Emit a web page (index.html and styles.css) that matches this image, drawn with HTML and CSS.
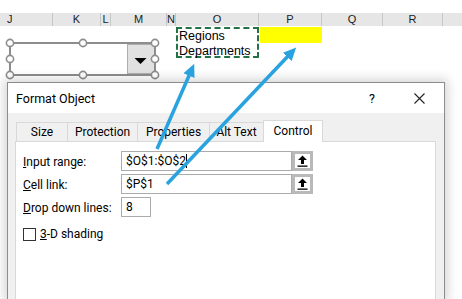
FILE: index.html
```html
<!DOCTYPE html>
<html>
<head>
<meta charset="utf-8">
<link rel="stylesheet" href="styles.css">
</head>
<body>
<div class="sheet">
  <div class="colhdr">
    <span class="col-j">J</span><span>K</span><span>L</span><span>M</span><span>N</span><span>O</span><span>P</span><span>Q</span><span>R</span><span class="col-end"></span>
  </div>
  <div class="cells">
    <div class="listrange">Regions<br>Departments</div>
    <div class="linkcell"></div>
  </div>
</div>

<svg class="combo" width="462" height="90" viewBox="0 0 462 90">
  <rect x="10" y="43" width="145" height="32" fill="#fff"/>
  <rect x="127.5" y="44.5" width="27" height="29" fill="#e1e1e1" stroke="#adadad"/>
  <polygon points="134.5,58 146.5,58 140.5,64" fill="#000"/>
  <rect x="10" y="43" width="145" height="32" fill="none" stroke="#8d8d8d" stroke-width="2"/>
  <g fill="#fff" stroke="#8d8d8d" stroke-width="1.6">
    <circle cx="10" cy="43" r="3.6"/><circle cx="83" cy="43" r="3.6"/><circle cx="155" cy="43" r="3.6"/>
    <circle cx="10" cy="59" r="3.6"/><circle cx="155" cy="59" r="3.6"/>
    <circle cx="10" cy="75" r="3.6"/><circle cx="83" cy="75" r="3.6"/><circle cx="155" cy="75" r="3.6"/>
  </g>
</svg>

<div class="dialog">
  <div class="titlebar">
    <span class="title">Format Object</span>
    <span class="help">?</span>
    <svg class="close" width="11" height="11" viewBox="0 0 11 11"><path d="M0.5 0.5 L10.5 10.5 M10.5 0.5 L0.5 10.5" stroke="#222" stroke-width="1.1"/></svg>
  </div>
  <div class="dlgbody">
    <div class="tabs">
      <div class="tab tab-size">Size</div>
      <div class="tab tab-prot">Protection</div>
      <div class="tab tab-prop">Properties</div>
      <div class="tab tab-alt">Alt Text</div>
      <div class="tab tab-ctrl active">Control</div>
    </div>
    <div class="panel">
      <div class="form">
        <label class="lbl"><u>I</u>nput range:</label>
        <div class="field">$O$1:$O$2<span class="caret"></span></div>
        <div class="refbtn"><svg width="11" height="12" viewBox="0 0 11 12"><path d="M5.5 0.5 L10 5 L7 5 L7 9 L4 9 L4 5 L1 5 Z" fill="#000"/><rect x="0.5" y="10.5" width="10" height="1.3" fill="#000"/></svg></div>
        <label class="lbl"><u>C</u>ell link:</label>
        <div class="field">$P$1</div>
        <div class="refbtn"><svg width="11" height="12" viewBox="0 0 11 12"><path d="M5.5 0.5 L10 5 L7 5 L7 9 L4 9 L4 5 L1 5 Z" fill="#000"/><rect x="0.5" y="10.5" width="10" height="1.3" fill="#000"/></svg></div>
        <label class="lbl"><u>D</u>rop down lines:</label>
        <div class="field short">8</div>
      </div>
      <div class="check"><span class="box"></span><span><u>3</u>-D shading</span></div>
    </div>
  </div>
</div>

<svg class="arrows" width="462" height="299" viewBox="0 0 462 299">
  <defs>
    <marker id="head" markerUnits="userSpaceOnUse" markerWidth="14" markerHeight="12" refX="4" refY="6" orient="auto">
      <path d="M0 0 L13 6 L0 12 Z" fill="#29a3df"/>
    </marker>
  </defs>
  <line x1="157" y1="149" x2="190.6" y2="72" stroke="#29a3df" stroke-width="3.5" marker-end="url(#head)"/>
  <line x1="167" y1="184" x2="290" y2="54" stroke="#29a3df" stroke-width="3.5" marker-end="url(#head)"/>
</svg>
</body>
</html>
```

FILE: styles.css
```css
* { box-sizing: border-box; }

body {
  margin: 0;
  width: 462px;
  height: 299px;
  overflow: hidden;
  position: relative;
  background: #fff;
  font-family: Roboto, "Noto Sans", sans-serif;
  color: #000;
}

.sheet { padding-top: 13px; }

.colhdr {
  display: grid;
  grid-template-columns: 53px 48px 10px 56px 9px 83px 63px 61px 60px 9px;
  height: 13px;
  background: #e6e6e6;
  font: 11px "Liberation Sans", Arial, sans-serif;
  color: #222;
}
.colhdr span {
  border-right: 1px solid #c6c6c6;
  text-align: center;
  line-height: 13px;
  white-space: nowrap;
}
.colhdr .col-j { text-align: left; padding-left: 7px; }
.colhdr .col-end { border-right: none; }

.cells {
  display: grid;
  grid-template-columns: 53px 48px 10px 56px 9px 83px 63px 61px 60px 9px;
  grid-template-rows: 16px 16px;
  margin-top: 1px;
  font: 12.5px "Liberation Sans", Arial, sans-serif;
}
.listrange {
  grid-column: 6;
  grid-row: 1 / span 2;
  height: 31px;
  border: 2px dashed #217346;
  padding-left: 1px;
  line-height: 15px;
  white-space: nowrap;
}
.linkcell {
  grid-column: 7;
  grid-row: 1;
  margin-left: 1px;
  background: #ffff00;
}

.combo { position: absolute; left: 0; top: 0; }

.dialog {
  position: absolute;
  left: 7px;
  top: 82px;
  width: 438px;
  height: 218px;
  border: 1px solid #8c8c8c;
  border-bottom: none;
  background: #f0f0f0;
  box-shadow: 0 0 10px 3px rgba(0, 0, 0, 0.16);
  display: flex;
  flex-direction: column;
  font-size: 12px;
}

.titlebar {
  height: 30px;
  background: #fff;
  display: flex;
  align-items: center;
  padding: 0 19px 0 8px;
}
.title { flex: 1; font-size: 12.5px; }
.help { font-size: 12.5px; margin-right: 39px; }
.close { display: block; }

.dlgbody {
  flex: 1;
  display: flex;
  flex-direction: column;
  padding: 7px 8px 0 7px;
}

.tabs {
  display: flex;
  align-items: flex-end;
  height: 21px;
  padding-left: 1px;
}
.tab {
  height: 19px;
  margin-right: -1px;
  border: 1px solid #d9d9d9;
  border-bottom: none;
  background: #f0f0f0;
  padding-top: 1px;
  line-height: 17px;
  text-align: center;
  white-space: nowrap;
}
.tab-size { width: 52px; }
.tab-prot { width: 71px; }
.tab-prop { width: 73px; }
.tab-alt { width: 55px; }
.tab-ctrl { width: 60px; }
.tab.active {
  position: relative;
  z-index: 1;
  height: 22px;
  margin-bottom: -1px;
  background: #fff;
  line-height: 19px;
}

.panel {
  flex: 1;
  background: #fff;
  border: 1px solid #d9d9d9;
  border-bottom: none;
  padding: 9px 7px;
}

.form {
  display: grid;
  grid-template-columns: 98px 171px 21px;
  grid-auto-rows: 20px;
  row-gap: 3px;
  align-items: center;
}
.lbl { white-space: nowrap; padding-top: 1px; }
.field {
  height: 20px;
  border: 1px solid #ababab;
  padding-left: 4px;
  line-height: 18px;
  white-space: nowrap;
}
.field.short { width: 30px; }
.caret {
  display: inline-block;
  width: 1px;
  height: 14px;
  background: #000;
  vertical-align: -3px;
}
.refbtn {
  height: 20px;
  border: 3px solid #b9b9b9;
  background: #fff;
  display: flex;
  align-items: center;
  justify-content: center;
}
.refbtn svg { display: block; }

.check {
  display: flex;
  align-items: center;
  gap: 4px;
  margin-top: 10px;
  white-space: nowrap;
}
.box {
  width: 13px;
  height: 13px;
  border: 1px solid #333;
  background: #fff;
}

.arrows { position: absolute; left: 0; top: 0; pointer-events: none; }
```
